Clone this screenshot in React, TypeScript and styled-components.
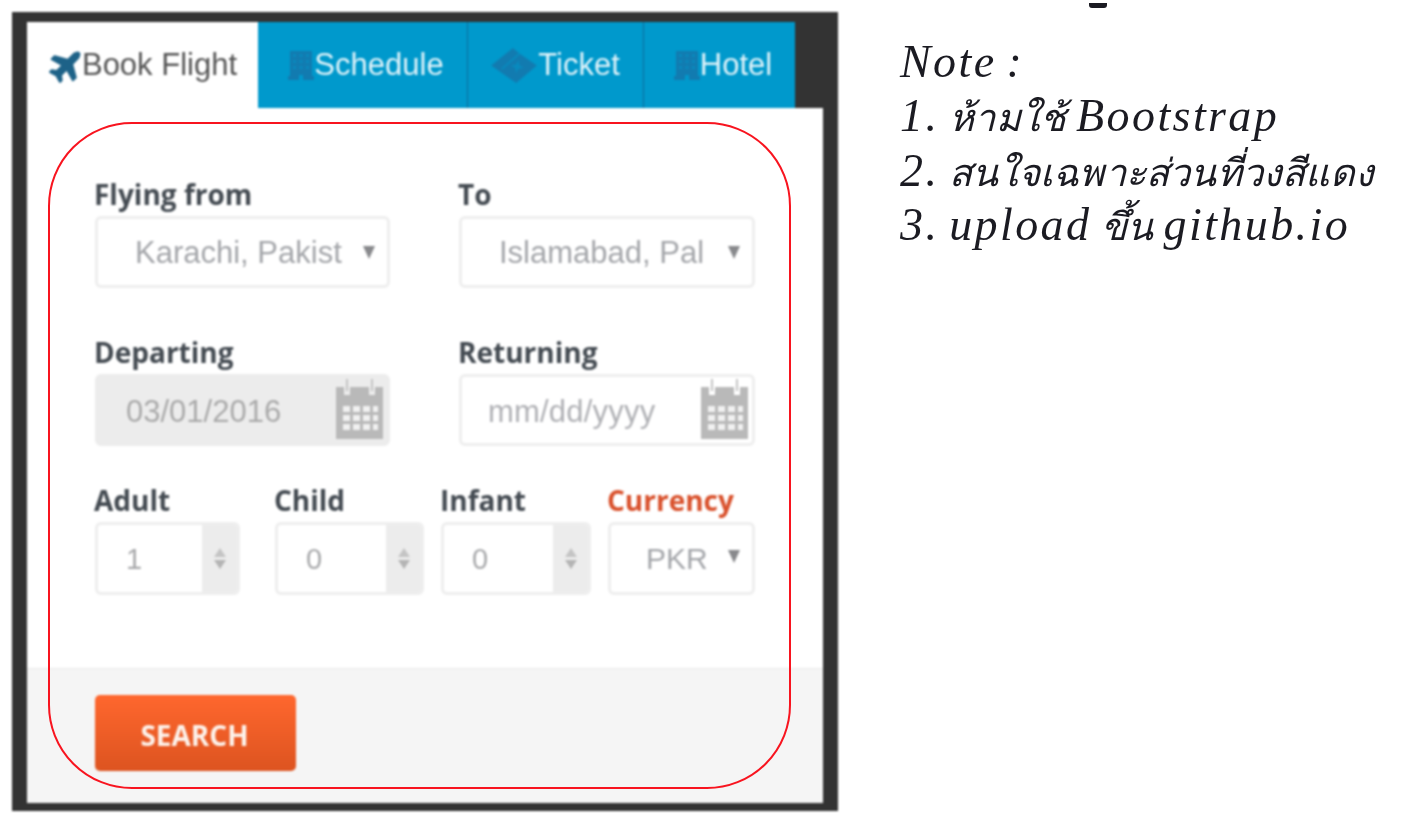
import React from "react";
import styled, { createGlobalStyle } from "styled-components";
import { FaPlane } from "react-icons/fa";

const GlobalStyle = createGlobalStyle`
  html, body {
    margin: 0;
    padding: 0;
    background: #fff;
  }
`;

const Page = styled.div`
  position: relative;
  width: 1408px;
  height: 839px;
  overflow: hidden;
  box-sizing: border-box;
  padding: 12px;
  display: flex;
  align-items: flex-start;
  gap: 62px;
  background: #fff;
`;

const FrameWrap = styled.div`
  flex: none;
  position: relative;
`;

const Frame = styled.div`
  width: 796px;
  background: #333;
  border: solid #333;
  border-width: 10px 15px 8px;
  filter: blur(0.8px);
`;

const TabBar = styled.div`
  display: flex;
  height: 86px;
`;

const Tab = styled.div<{ $width: number; $active?: boolean }>`
  box-sizing: border-box;
  width: ${(p) => p.$width}px;
  padding-left: ${(p) => (p.$active ? 4 : 7)}px;
  display: flex;
  align-items: center;
  justify-content: center;
  font: 31px "Liberation Sans", Arial, sans-serif;
  background: ${(p) => (p.$active ? "#fff" : "#0099cc")};
  color: ${(p) => (p.$active ? "#555" : "#dff3fa")};
  border-right: ${(p) => (p.$active ? "none" : "1px solid #0b6d9b")};

  &:last-child {
    border-right: none;
  }

  svg {
    flex: none;
    color: ${(p) => (p.$active ? "#1d6288" : "#127bb0")};
  }
`;

const TicketTab = styled(Tab)`
  padding: 0 1px 0 0;
`;

const PlaneIcon = styled(FaPlane)`
  width: 36px;
  height: 36px;
  margin: 0 -3px;
  transform: rotate(-45deg);
`;

const Form = styled.div`
  box-sizing: border-box;
  height: 560px;
  background: #fff;
  padding: 74px 68px 0;
`;

const Row = styled.div<{ $top?: number; $gap: number }>`
  display: flex;
  gap: ${(p) => p.$gap}px;
  margin-top: ${(p) => p.$top ?? 0}px;
`;

const Field = styled.div<{ $width: number }>`
  width: ${(p) => p.$width}px;
  flex: none;
`;

const Label = styled.div<{ $accent?: boolean }>`
  height: 34px;
  margin-left: -1px;
  white-space: nowrap;
  font: 700 28px/25px "Open Sans", sans-serif;
  color: ${(p) => (p.$accent ? "#d9512c" : "#444b52")};
`;

const Control = styled.div<{ $disabled?: boolean; $height?: number }>`
  box-sizing: border-box;
  height: ${(p) => p.$height ?? 72}px;
  display: flex;
  align-items: center;
  overflow: hidden;
  border: 3px solid ${(p) => (p.$disabled ? "#ececec" : "#eeeeee")};
  border-radius: 6px;
  background: ${(p) => (p.$disabled ? "#ececec" : "#fff")};
  font: 31px "Liberation Sans", Arial, sans-serif;
  color: #a4a6aa;
`;

const SelectText = styled.div<{ $indent: number; $small?: boolean }>`
  flex: 1;
  min-width: 0;
  padding: ${(p) => (p.$small ? 0 : 2)}px 0 0 ${(p) => p.$indent}px;
  white-space: nowrap;
  font-size: ${(p) => (p.$small ? 30 : 31)}px;
`;

const Caret = styled.span<{ $raised?: boolean }>`
  flex: none;
  width: 0;
  height: 0;
  margin: 0 12px ${(p) => (p.$raised ? 4 : 0)}px 10px;
  border-left: 6px solid transparent;
  border-right: 6px solid transparent;
  border-top: 13px solid #88898c;
`;

const DateText = styled.div<{ $indent: number; $light?: boolean }>`
  flex: 1;
  padding: 4px 0 0 ${(p) => p.$indent}px;
  white-space: nowrap;
  letter-spacing: ${(p) => (p.$light ? 0.2 : 0)}px;
  color: ${(p) => (p.$light ? "#b0b1b5" : "#aaaaaa")};
`;

const CalendarSvg = styled.svg`
  flex: none;
  width: 47px;
  height: 60px;
  margin: 0 4px 2px 0;
`;

const NumberValue = styled.div`
  flex: 1;
  padding: 2px 0 0 28px;
  color: #a8a9ab;
  font-size: 29px;
`;

const Spinner = styled.div`
  flex: none;
  align-self: stretch;
  width: 35px;
  background: #ececec;
  display: flex;
  flex-direction: column;
  align-items: center;
  justify-content: center;
  gap: 3px;
`;

const SpinArrow = styled.span<{ $down?: boolean }>`
  width: 0;
  height: 0;
  border-left: 6px solid transparent;
  border-right: 6px solid transparent;
  ${(p) => (p.$down ? "border-top: 9px solid #b4b4b4;" : "border-bottom: 9px solid #c4c4c4;")}
`;

const Footer = styled.div`
  box-sizing: border-box;
  height: 135px;
  padding: 26px 68px 0;
  background: #f5f5f5;
  border-top: 1px solid #e9e9e9;
`;

const SearchButton = styled.button`
  display: block;
  width: 201px;
  height: 76px;
  padding: 4px 2px 0 0;
  border: none;
  border-radius: 5px;
  background: linear-gradient(#ff672e, #dd5420);
  color: #fdf3ec;
  font: 700 28px "Open Sans", sans-serif;
  text-transform: uppercase;
`;

const RedOutline = styled.div`
  position: absolute;
  left: 36px;
  top: 110px;
  width: 743px;
  height: 667px;
  box-sizing: border-box;
  border: 2.5px solid #f8141f;
  border-radius: 84px;
  pointer-events: none;
`;

const Notes = styled.div`
  margin-top: 23px;
  font: italic 46px/54.4px "Liberation Serif", "DejaVu Serif", serif;
  letter-spacing: 2.4px;
  word-spacing: -4px;
  color: #1b1b22;
  white-space: nowrap;
  filter: blur(0.5px);
`;

const Thai = styled.span`
  font-size: 38px;
  line-height: 1;
  letter-spacing: 0.2px;
`;

const CutGlyph = styled.div`
  position: absolute;
  left: 1089px;
  top: 3px;
  width: 18px;
  height: 5px;
  background: #1b1b22;
  border-radius: 0 0 3px 3px;
  filter: blur(0.6px);
`;

const BuildingIcon = () => (
  <svg width="26" height="30" viewBox="0 0 26 30" fill="currentColor">
    <path d="M2 1h22v25h2v4H15v-5h-4v5H0v-4h2z" />
    <path
      fill="#0099cc"
      opacity="0.5"
      d="M5 4h3v3H5zM11.500 4h3v3h-3zM18 4h3v3h-3zM5 10h3v3H5zM11.500 10h3v3h-3zM18 10h3v3h-3zM5 16h3v3H5zM11.500 16h3v3h-3zM18 16h3v3h-3z"
    />
  </svg>
);

const TicketIcon = () => (
  <svg width="48" height="37" viewBox="0 0 44 34" fill="currentColor">
    <path d="M21 1 L27 6 L43 17 L24 33 L18 29 L1 17z" />
    <path stroke="#0099cc" strokeOpacity="0.6" strokeWidth="1.500" d="M27 6 L11 20" />
    <path fill="#0099cc" opacity="0.55" d="M26 12l1 5 4 2-5 1-2 4-1-5-4-2 5-1z" />
  </svg>
);

const CalendarIcon = () => (
  <CalendarSvg viewBox="0 0 47 60">
    <path fill="#b9b9b9" d="M0 8h8v8h6V8h19v8h6V8h8v52H0z" />
    <path fill="none" stroke="#c4c4c4" strokeWidth="2" d="M11 0v12M36 0v12" />
    <path
      fill="#f1f1f1"
      d="M7 27h7v6H7zM17 27h7v6h-7zM27 27h7v6h-7zM37 27h5v6h-5zM7 36h7v6H7zM17 36h7v6h-7zM27 36h7v6h-7zM37 36h5v6h-5zM7 45h7v6H7zM17 45h7v6h-7zM27 45h7v6h-7zM37 45h5v6h-5z"
    />
  </CalendarSvg>
);

const SelectField = ({
  label,
  value,
  width,
  indent,
  accent,
}: {
  label: string;
  value: string;
  width: number;
  indent: number;
  accent?: boolean;
}) => (
  <Field $width={width}>
    <Label $accent={accent}>{label}</Label>
    <Control $height={accent ? 73 : 72}>
      <SelectText $indent={indent} $small={accent}>
        {value}
      </SelectText>
      <Caret $raised={accent} />
    </Control>
  </Field>
);

const DateField = ({
  label,
  value,
  width,
  disabled,
}: {
  label: string;
  value: string;
  width: number;
  disabled?: boolean;
}) => (
  <Field $width={width}>
    <Label>{label}</Label>
    <Control $disabled={disabled}>
      <DateText $indent={disabled ? 28 : 26} $light={!disabled}>
        {value}
      </DateText>
      <CalendarIcon />
    </Control>
  </Field>
);

const NumberField = ({ label, value, width }: { label: string; value: string; width: number }) => (
  <Field $width={width}>
    <Label>{label}</Label>
    <Control $height={73}>
      <NumberValue>{value}</NumberValue>
      <Spinner>
        <SpinArrow />
        <SpinArrow $down />
      </Spinner>
    </Control>
  </Field>
);

export default function App() {
  return (
    <>
      <GlobalStyle />
      <Page>
        <CutGlyph />
        <FrameWrap>
          <Frame>
            <TabBar>
              <Tab $width={231} $active>
                <PlaneIcon />
                Book Flight
              </Tab>
              <Tab $width={210}>
                <BuildingIcon />
                Schedule
              </Tab>
              <TicketTab $width={176}>
                <TicketIcon />
                Ticket
              </TicketTab>
              <Tab $width={151}>
                <BuildingIcon />
                Hotel
              </Tab>
            </TabBar>
            <Form>
              <Row $gap={69}>
                <SelectField label="Flying from" value="Karachi, Pakist" width={295} indent={37} />
                <SelectField label="To" value="Islamabad, Pal" width={296} indent={37} />
              </Row>
              <Row $top={52} $gap={69}>
                <DateField label="Departing" value="03/01/2016" width={295} disabled />
                <DateField label="Returning" value="mm/dd/yyyy" width={296} />
              </Row>
              <Row $top={42} $gap={0}>
                <NumberField label="Adult" value="1" width={145} />
                <Field $width={35} />
                <NumberField label="Child" value="0" width={149} />
                <Field $width={17} />
                <NumberField label="Infant" value="0" width={150} />
                <Field $width={17} />
                <SelectField label="Currency" value="PKR" width={147} indent={35} accent />
              </Row>
            </Form>
            <Footer>
              <SearchButton>Search</SearchButton>
            </Footer>
          </Frame>
          <RedOutline />
        </FrameWrap>
        <Notes>
          <div>Note :</div>
          <div>
            1. <Thai>ห้ามใช้</Thai> Bootstrap
          </div>
          <div>
            2. <Thai>สนใจเฉพาะส่วนที่วงสีแดง</Thai>
          </div>
          <div>
            3. upload <Thai>ขึ้น</Thai> github.io
          </div>
        </Notes>
      </Page>
    </>
  );
}
